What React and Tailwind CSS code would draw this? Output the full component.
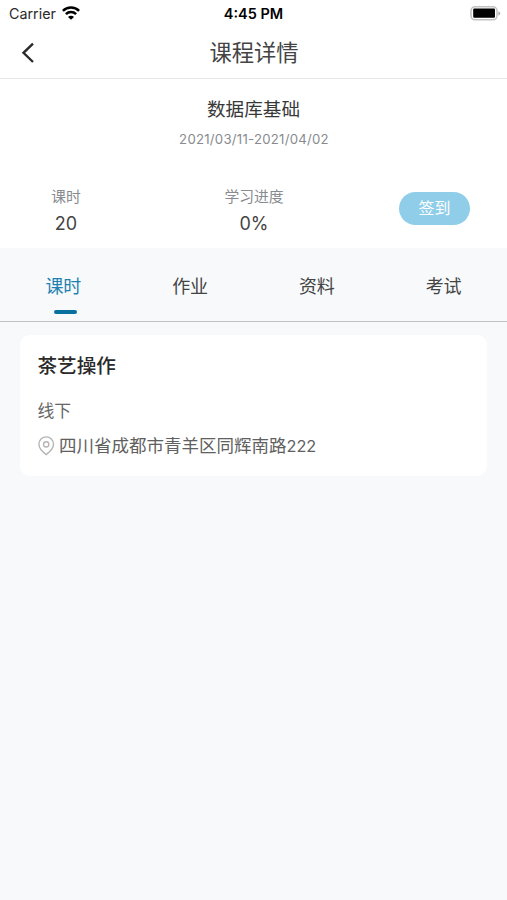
import React from "react";

const tabs = ["课时", "作业", "资料", "考试"];

function StatusBar() {
  return (
    <div className="relative flex h-[27px] items-center justify-between pl-[9px] pr-[6px] text-black">
      <div className="flex items-center gap-[6px]">
        <span className="text-[14.3px] leading-[27px] text-[#2a2a2a]">Carrier</span>
        <svg className="-mt-[2px]" width="18" height="14" viewBox="0 0 18 14" fill="none" stroke="#000" strokeWidth="2.5">
          <path d="M0.9 4.9a11.6 11.6 0 0 1 16.2 0" />
          <path d="M3.9 8.2a7.2 7.2 0 0 1 10.2 0" />
          <path d="M9 13.8 6 10.9a4.2 4.2 0 0 1 6 0Z" fill="#000" stroke="none" />
        </svg>
      </div>
      <span className="absolute inset-x-0 text-center text-[14.5px] font-semibold leading-[28px]">
        4:45 PM
      </span>
      <svg width="31" height="15" viewBox="0 0 31 15">
        <rect x="1" y="0.8" width="26" height="13" rx="4" fill="#fff" stroke="#c2c2c2" strokeWidth="1.6" />
        <rect x="3.2" y="2.6" width="21.8" height="9.2" rx="1" fill="#000" />
        <path d="M28.4 5.2c2.4 1 2.4 3.4 0 4.4Z" fill="#aaa" />
      </svg>
    </div>
  );
}

function NavBar() {
  return (
    <div className="relative flex h-[52px] items-center border-b border-[#e6e6e6] pl-[21px]">
      <svg width="15" height="22" viewBox="0 0 15 22" fill="none" stroke="#2b2b2b" strokeWidth="2.4">
        <path d="M12 1.6 2.5 10.8 12 20" />
      </svg>
      <h1 className="absolute inset-x-0 pl-px text-center text-[22.3px] leading-[50px] text-[#444]">
        课程详情
      </h1>
    </div>
  );
}

function Stat({ label, value }) {
  return (
    <div className="flex flex-col items-center">
      <span className="text-[14.8px] leading-[22px] text-[#888b8f]">{label}</span>
      <span className="mt-[2px] text-[18px] leading-[28px] text-[#444]">{value}</span>
    </div>
  );
}

function Summary() {
  return (
    <section className="h-[169px] pt-[16px]">
      <h2 className="text-center text-[18.6px] leading-[28px] text-[#383838]">数据库基础</h2>
      <p className="mt-[6px] pl-px text-center text-[13.2px] leading-[20px] tracking-[0.25px] text-[#888b8f]">
        2021/03/11-2021/04/02
      </p>
      <div className="mt-[37px] flex items-start justify-between pl-[51px] pr-[37px]">
        <div className="flex w-[30px] justify-center">
          <Stat label="课时" value="20" />
        </div>
        <div className="ml-[28px]">
          <Stat label="学习进度" value="0%" />
        </div>
        <button className="mt-[6px] h-[33px] w-[71px] rounded-full bg-[#8fcde9] text-[16px] leading-[33px] text-white">
          签到
        </button>
      </div>
    </section>
  );
}

function Tabs() {
  return (
    <nav className="grid h-[74px] grid-cols-4 border-b border-[#bfc1c4] bg-[#f7f9fb] text-[18px]">
      {tabs.map((tab, index) => (
        <div key={tab} className="flex flex-col items-center pt-[25px]">
          <span className={index === 0 ? "leading-[28px] text-[#1e81b0]" : "leading-[28px] text-[#444]"}>
            {tab}
          </span>
          {index === 0 && <span className="ml-[4px] mt-[9px] h-[4px] w-[23px] rounded-full bg-[#09709f]" />}
        </div>
      ))}
    </nav>
  );
}

function LessonCard() {
  return (
    <article className="mx-[20px] mt-[13px] h-[141px] rounded-[10px] bg-white px-[17.5px] pt-[16px]">
      <h3 className="text-[19.6px] font-medium leading-[30px] text-[#2a2a2a]">茶艺操作</h3>
      <p className="mt-[17px] text-[16.8px] leading-[26px] text-[#666]">线下</p>
      <div className="mt-[9px] flex items-center text-[17.5px] leading-[26px] text-[#606060]">
        <svg className="mr-[4.5px]" width="17" height="20" viewBox="0 0 17 20" fill="none" stroke="#b5b5b5" strokeWidth="1.4">
          <path d="M8.2 18.6C5.6 16.6 0.9 12.7 0.9 8.2a7.3 7.3 0 0 1 14.6 0c0 4.5-4.7 8.4-7.3 10.4Z" />
          <circle cx="8.2" cy="8.4" r="2.6" />
        </svg>
        <span>
          四川省成都市青羊区同辉南路<span className="text-[16.3px]">222</span>
        </span>
      </div>
    </article>
  );
}

function App() {
  return (
    <div className="min-h-screen overflow-hidden bg-[#f7f9fb] font-['Inter','Noto_Sans_CJK_SC',sans-serif]">
      <header className="bg-white">
        <StatusBar />
        <NavBar />
        <Summary />
      </header>
      <Tabs />
      <LessonCard />
    </div>
  );
}

export default App;
